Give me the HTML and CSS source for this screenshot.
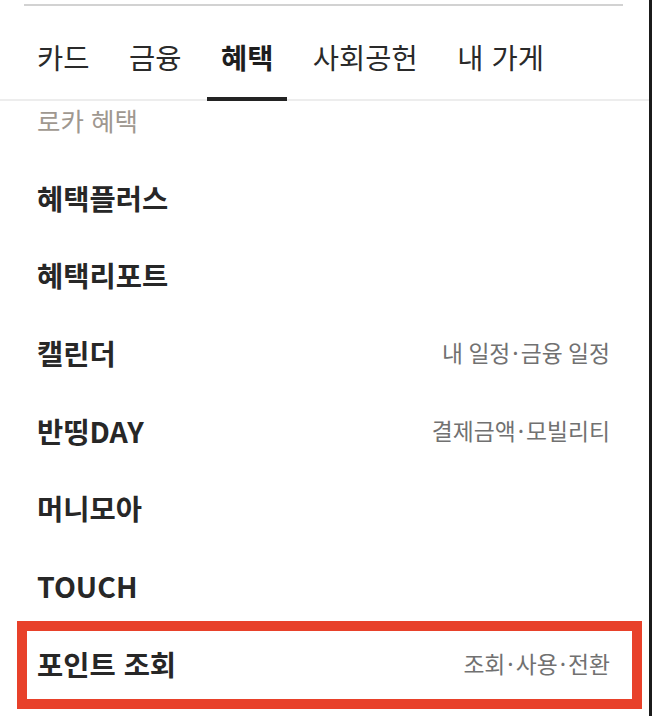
FILE: index.html
```html
<!DOCTYPE html>
<html lang="ko">
<head>
<meta charset="utf-8">
<title>혜택</title>
<link rel="stylesheet" href="styles.css">
</head>
<body>
<div class="frame">
  <div class="screen">
    <div class="top-rule"></div>
    <nav class="tabs">
      <a class="tab">카드</a>
      <a class="tab">금융</a>
      <a class="tab active">혜택</a>
      <a class="tab">사회공헌</a>
      <a class="tab">내 가게</a>
    </nav>
    <div class="section-label">로카 혜택</div>
    <ul class="menu">
      <li class="item"><span class="title">혜택플러스</span></li>
      <li class="item"><span class="title">혜택리포트</span></li>
      <li class="item"><span class="title">캘린더</span><span class="sub">내 일정<span class="dot">·</span>금융 일정</span></li>
      <li class="item"><span class="title">반띵DAY</span><span class="sub">결제금액<span class="dot">·</span>모빌리티</span></li>
      <li class="item"><span class="title">머니모아</span></li>
      <li class="item"><span class="title">TOUCH</span></li>
      <li class="item"><span class="title">포인트 조회</span><span class="sub">조회<span class="dot">·</span>사용<span class="dot">·</span>전환</span></li>
    </ul>
    <div class="highlight"></div>
  </div>
  <div class="edge"></div>
</div>
</body>
</html>
```

FILE: styles.css
```css
html, body {
  margin: 0;
  padding: 0;
  background: #ffffff;
}

body {
  width: 652px;
  height: 716px;
  overflow: hidden;
  font-family: "Noto Sans CJK KR", "Noto Sans", sans-serif;
  color: #222222;
}

.frame {
  display: flex;
  width: 652px;
  height: 716px;
}

.screen {
  position: relative;
  flex: 0 0 649px;
  height: 716px;
  overflow: hidden;
  background: #ffffff;
}

.edge {
  flex: 1 1 auto;
  background: #1b1b1b;
}

.top-rule {
  margin: 4px 26px 0 24px;
  height: 2px;
  background: #d2d2d2;
}

.tabs {
  display: flex;
  gap: 12.5px;
  height: 95px;
  padding-left: 23.5px;
  box-sizing: border-box;
  box-shadow: inset 0 -2px 0 #ededed;
}

.tab {
  display: flex;
  align-items: center;
  box-sizing: border-box;
  height: 95px;
  padding: 11px 13.5px 0;
  border-bottom: 4px solid transparent;
  font-size: 28.5px;
  line-height: 38px;
  color: #2a2a2a;
  white-space: nowrap;
}

.tab.active {
  font-weight: 700;
  color: #1e1e1e;
  border-bottom-color: #232323;
}

.section-label {
  padding: 1px 0 0 37px;
  height: 57px;
  box-sizing: border-box;
  font-size: 25.5px;
  line-height: 36px;
  color: #9f9890;
}

.menu {
  list-style: none;
  margin: 0;
  padding: 0;
}

.item {
  display: flex;
  align-items: center;
  justify-content: space-between;
  height: 77.66px;
  padding: 2px 39px 0 37px;
  box-sizing: border-box;
}

.title {
  font-size: 28.5px;
  font-weight: 700;
  line-height: 40px;
  color: #272727;
}

.sub {
  font-size: 22.8px;
  line-height: 30px;
  word-spacing: -1px;
  color: #717171;
}

.dot {
  padding: 0 2px;
}

.highlight {
  position: absolute;
  left: 17px;
  top: 621px;
  width: 625px;
  height: 88px;
  box-sizing: border-box;
  border: 10px solid #e8412a;
  pointer-events: none;
}
```
